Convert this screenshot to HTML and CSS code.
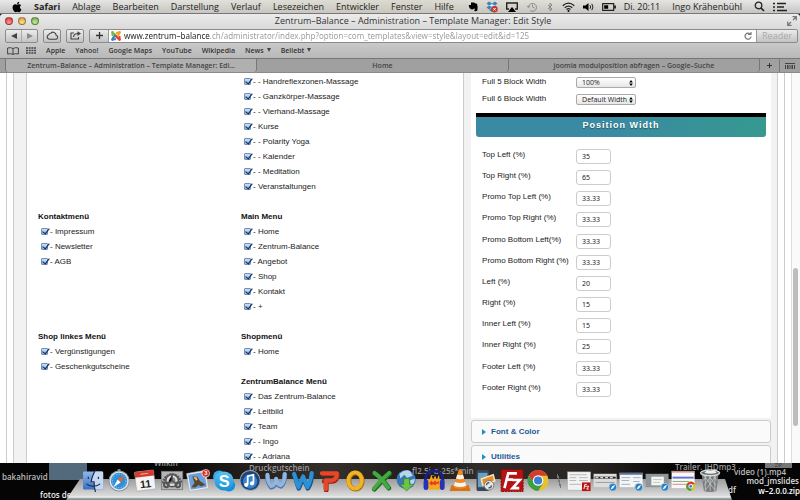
FILE: index.html
```html
<!DOCTYPE html>
<html lang="de">
<head>
<meta charset="utf-8">
<title>Zentrum-Balance – Administration – Template Manager: Edit Style</title>
<link rel="stylesheet" href="styles.css">
</head>
<body>
<header class="menubar">
  <nav class="menus">
    <svg class="apple" viewBox="0 0 384 512"><path d="M318.700 268.700c-.2-36.700 16.400-64.400 50-84.800-18.800-26.900-47.200-41.700-84.700-44.600-35.500-2.800-74.300 20.700-88.500 20.700-15 0-49.400-19.700-76.400-19.700C63.300 141.200 4 184.800 4 273.500q0 39.300 14.400 81.200c12.800 36.700 59 126.700 107.200 125.200 25.200-.6 43-17.900 75.800-17.900 31.800 0 48.300 17.900 76.400 17.900 48.600-.7 90.400-82.500 102.600-119.300-65.200-30.700-61.700-90-61.700-91.900zm-56.600-164.200c27.300-32.400 24.800-61.900 24-72.500-24.100 1.400-52 16.400-67.900 34.900-17.500 19.800-27.800 44.300-25.600 71.900 26.100 2 49.900-11.400 69.500-34.300z"/></svg>
    <b>Safari</b><span>Ablage</span><span>Bearbeiten</span><span>Darstellung</span><span>Verlauf</span><span>Lesezeichen</span><span>Entwickler</span><span>Fenster</span><span>Hilfe</span>
  </nav>
  <div class="status">
    <svg width="10" height="10" viewBox="0 0 10 10"><path d="M3 .5h3l1 .8 2 .4q1 3 .4 6.500Q9 9.600 7 9.300q-1-.3-.7-1.300.3-.8 1.300-.6Q6 6 5.500 7 4 8 2 6.500.8 5 .8 3H3z"/></svg>
    <svg width="12" height="12" viewBox="0 0 12 12"><path fill="#3d83b8" d="M3 .5 6 2.500 9 .5l2.500 2L9 4.500l2.500 2L9 8.500 6 6.300l-3 2.200-2.500-2L3 4.500l-2.500-2zM3 9l3-2 3 2-3 2z"/><path fill="#dcecf5" d="M3 4.500 6 3l3 1.500L6 6z"/><circle cx="8.500" cy="8.300" r="3.200" fill="#c5352c"/><path stroke="#fff" d="m7.300 7.100 2.400 2.400m0-2.400L7.300 9.500"/></svg>
    <svg width="12" height="10" viewBox="0 0 12 10"><path fill="none" stroke="#222" stroke-width="1.400" d="M3 7H.7V1h10.600v6H9"/><path d="m6 5 4 5H2z"/></svg>
    <svg class="faded" width="12" height="10" viewBox="0 0 12 10"><path fill="none" stroke="#222" d="M2.500 5A4 4 0 1 1 4 8.500M6.500 2.500V5l2 1M.8 4l1.700 1.700L4 4"/></svg>
    <svg class="faded" width="8" height="10" viewBox="0 0 8 10"><path fill="none" stroke="#222" d="m2 3 4 4-2 2V1l2 2-4 4"/></svg>
    <svg width="13" height="10" viewBox="0 0 13 10"><path fill="none" stroke="#222" stroke-width="1.300" d="M.7 3.700q5.800-5.200 11.600 0M2.700 5.700q3.800-3.200 7.600 0M4.500 7.500q2-1.600 4 0"/><circle cx="6.500" cy="9" r="1"/></svg>
    <svg width="11" height="10" viewBox="0 0 11 10"><path d="M0 3.500h2.500L5.500 1v8l-3-2.500H0z"/><path fill="none" stroke="#222" d="M7 3.200q1.300 1.800 0 3.600M8.800 1.800q2.300 3.200 0 6.400"/></svg>
    <svg width="14" height="10" viewBox="0 0 14 10"><path fill="none" stroke="#222" stroke-width="1.200" d="M.7 1.700h11v6.600H.7z"/><path d="M2.200 3.200h4v3.600h-4zM12.300 3.500h1.500v3h-1.500z"/></svg>
    <span>Di. 20:11</span>
    <span class="user">Ingo Krähenbühl</span>
    <svg class="spot" width="11" height="11" viewBox="0 0 11 11"><circle cx="4.500" cy="4.500" r="3.300" fill="none" stroke="#222" stroke-width="1.300"/><path stroke="#222" stroke-width="1.700" d="m7 7 3 3"/></svg>
    <svg width="14" height="10" viewBox="0 0 14 10"><path stroke="#222" stroke-width="1.700" d="M0 1.500h2M4 1.500h9M0 5h2M4 5h7M0 8.500h2M4 8.500h10"/></svg>
  </div>
</header>

<section class="browser">
  <div class="titlebar">
    <div class="lights"><i class="red"></i><i class="yellow"></i><i class="green"></i></div>
    <h1>Zentrum–Balance – Administration – Template Manager: Edit Style</h1>
    <svg class="expand" width="10" height="10" viewBox="0 0 10 10"><path fill="none" stroke="#777" stroke-width="1.200" d="M5.500.7h3.800v3.800M9 1 6 4M4.500 9.300H.7V5.500M1 9l3-3"/></svg>
  </div>

  <div class="toolbar">
    <div class="pair">
      <button type="button" aria-label="Zurück"><svg width="6" height="6" viewBox="0 0 6 6"><path fill="#444" d="M6 0v6L0 3z"/></svg></button>
      <button type="button" aria-label="Vorwärts"><svg width="6" height="6" viewBox="0 0 6 6"><path fill="#8a8a8a" d="M0 0v6l6-3z"/></svg></button>
    </div>
    <button class="tool" type="button" aria-label="iCloud-Tabs"><svg width="13" height="9" viewBox="0 0 13 9"><path fill="none" stroke="#444" stroke-width="1.100" d="M3.300 8.200a2.300 2.300 0 0 1-.5-4.500 1.700 1.700 0 0 1 2-1.400 3 3 0 0 1 5.300 2 2 2 0 0 1 0 3.900z"/></svg></button>
    <button class="tool" type="button" aria-label="Teilen"><svg width="11" height="9" viewBox="0 0 11 9"><path fill="none" stroke="#444" stroke-width="1.100" d="M4 2H1v6h7.500V6M3.500 6q.5-3.500 4.500-3.500"/><path fill="#444" d="M7.500.3 11 2.600 7.500 5z"/></svg></button>
    <div class="address">
      <button type="button" aria-label="Lesezeichen hinzufügen"><svg width="7" height="7" viewBox="0 0 7 7"><path stroke="#333" stroke-width="1.300" d="M3.500 0v7M0 3.500h7"/></svg></button>
      <label class="url">
        <svg width="10" height="10" viewBox="0 0 10 10"><g fill="none" stroke-width="2"><path stroke="#7ab83f" d="M1.500 5V3q1-1 2 0l2 2"/><path stroke="#f59b26" d="M5 1.700h2.500q1 1 0 2L5 6"/><path stroke="#e0402f" d="M8.500 5v2q-1 1-2 0l-2-2"/><path stroke="#3e7bc0" d="M5 8.300H2.500q-1-1 0-2L4.500 4"/></g><circle cx="1.500" cy="1.500" r="1.400" fill="#7ab83f"/><circle cx="8.500" cy="1.500" r="1.400" fill="#f59b26"/><circle cx="8.500" cy="8.500" r="1.400" fill="#e0402f"/><circle cx="1.500" cy="8.500" r="1.400" fill="#3e7bc0"/></svg>
        <input type="text" aria-label="Adresse" value="www.zentrum–balance.ch/administrator/index.php?option=com_templates&amp;view=style&amp;layout=edit&amp;id=125">
        <svg width="8" height="8" viewBox="0 0 8 8"><path fill="none" stroke="#777" stroke-width="1.200" d="M6.500 2.500A3 3 0 1 0 7 4.500M4 2.500h3V0"/></svg>
      </label>
      <button class="reader" type="button">Reader</button>
    </div>
  </div>

  <nav class="bookmarks">
    <svg width="12" height="8" viewBox="0 0 12 8"><path fill="none" stroke="#444" d="M6 1.500Q3.500 0 .6 1v6q3-.8 5.400.3Q8.500 6.200 11.400 7V1Q8.500 0 6 1.500zv6"/></svg>
    <svg width="10" height="7" viewBox="0 0 10 7"><path stroke="#444" stroke-width="1.700" stroke-dasharray="2 .7" d="M0 1h10M0 3.500h10M0 6h10"/></svg>
    <a href="#">Apple</a><a href="#">Yahoo!</a><a href="#">Google Maps</a><a href="#">YouTube</a><a href="#">Wikipedia</a><a href="#" class="drop">News</a><a href="#" class="drop">Beliebt</a>
  </nav>

  <nav class="tabs">
    <a href="#" class="tab active">Zentrum–Balance – Administration – Template Manager: Edi…</a>
    <a href="#" class="tab">Home</a>
    <a href="#" class="tab">joomla modulposition abfragen – Google–Suche</a>
    <button type="button" aria-label="Neuer Tab"><svg width="5" height="5" viewBox="0 0 5 5"><path stroke="#333" d="M2.500 0v5M0 2.500h5"/></svg></button>
    <button type="button" aria-label="Alle Tabs"><svg width="10" height="6" viewBox="0 0 10 6"><path stroke="#444" d="M0 .5h10M.5 2v4M2.500 2v4M4 2v4M6 2v4M7.500 2v4M9.500 2v4"/></svg></button>
  </nav>

  <main class="page">
    <div class="outer">
      <div class="frame">
        <section class="assign">
          <fieldset></fieldset>
          <fieldset>
            <label><input type="checkbox" checked>- - Handreflexzonen-Massage</label>
            <label><input type="checkbox" checked>- - Ganzkörper-Massage</label>
            <label><input type="checkbox" checked>- - Vierhand-Massage</label>
            <label><input type="checkbox" checked>- Kurse</label>
            <label><input type="checkbox" checked>- - Polarity Yoga</label>
            <label><input type="checkbox" checked>- - Kalender</label>
            <label><input type="checkbox" checked>- - Meditation</label>
            <label><input type="checkbox" checked>- Veranstaltungen</label>
          </fieldset>
          <fieldset>
            <legend>Kontaktmenü</legend>
            <label><input type="checkbox" checked>- Impressum</label>
            <label><input type="checkbox" checked>- Newsletter</label>
            <label><input type="checkbox" checked>- AGB</label>
          </fieldset>
          <fieldset>
            <legend>Main Menu</legend>
            <label><input type="checkbox" checked>- Home</label>
            <label><input type="checkbox" checked>- Zentrum-Balance</label>
            <label><input type="checkbox" checked>- Angebot</label>
            <label><input type="checkbox" checked>- Shop</label>
            <label><input type="checkbox" checked>- Kontakt</label>
            <label><input type="checkbox" checked>- +</label>
          </fieldset>
          <fieldset>
            <legend>Shop linkes Menü</legend>
            <label><input type="checkbox" checked>- Vergünstigungen</label>
            <label><input type="checkbox" checked>- Geschenkgutscheine</label>
          </fieldset>
          <div class="stack">
            <fieldset>
              <legend>Shopmenü</legend>
              <label><input type="checkbox" checked>- Home</label>
            </fieldset>
            <fieldset>
              <legend>ZentrumBalance Menü</legend>
              <label><input type="checkbox" checked>- Das Zentrum-Balance</label>
              <label><input type="checkbox" checked>- Leitbild</label>
              <label><input type="checkbox" checked>- Team</label>
              <label><input type="checkbox" checked>- - Ingo</label>
              <label><input type="checkbox" checked>- - Adriana</label>
            </fieldset>
          </div>
        </section>

        <aside class="options">
          <div class="panel">
            <div class="selects">
              <label for="full5">Full 5 Block Width</label>
              <span class="pick"><select id="full5"><option>100%</option></select><svg width="4" height="6" viewBox="0 0 4 6"><path d="m2 0 1.800 2.400H.2zM2 6 .2 3.600h3.600z"/></svg></span>
              <label for="full6">Full 6 Block Width</label>
              <span class="pick"><select id="full6"><option>Default Width</option></select><svg width="4" height="6" viewBox="0 0 4 6"><path d="m2 0 1.800 2.400H.2zM2 6 .2 3.600h3.600z"/></svg></span>
            </div>
            <h2>Position Width</h2>
            <div class="widths">
              <label for="w1">Top Left (%)</label><input id="w1" type="text" value="35">
              <label for="w2">Top Right (%)</label><input id="w2" type="text" value="65">
              <label for="w3">Promo Top Left (%)</label><input id="w3" type="text" value="33.33">
              <label for="w4">Promo Top Right (%)</label><input id="w4" type="text" value="33.33">
              <label for="w5">Promo Bottom Left(%)</label><input id="w5" type="text" value="33.33">
              <label for="w6">Promo Bottom Right (%)</label><input id="w6" type="text" value="33.33">
              <label for="w7">Left (%)</label><input id="w7" type="text" value="20">
              <label for="w8">Right (%)</label><input id="w8" type="text" value="15">
              <label for="w9">Inner Left (%)</label><input id="w9" type="text" value="15">
              <label for="w10">Inner Right (%)</label><input id="w10" type="text" value="25">
              <label for="w11">Footer Left (%)</label><input id="w11" type="text" value="33.33">
              <label for="w12">Footer Right (%)</label><input id="w12" type="text" value="33.33">
            </div>
          </div>
          <button class="fold" type="button"><i></i>Font &amp; Color</button>
          <button class="fold" type="button"><i></i>Utilities</button>
        </aside>
      </div>
    </div>
    <div class="scrollbar"><div class="thumb"></div></div>
  </main>
</section>

<footer class="desktop">
  <div class="preview"></div>
  <span class="file wilkin">Wilkin</span>
  <span class="file baka">bakahiravid</span>
  <span class="file fotos">fotos de</span>
  <span class="file druck">Druckgutschein</span>
  <span class="file sepin">fl2.5i_a-25s*min</span>
  <span class="file trailer">Trailer. IHDmp3</span>
  <span class="file video">video (1).mp4</span>
  <span class="file slides">mod_jmslides</span>
  <span class="file zip">w–2.0.0.zip</span>
  <span class="file pdf">df</span>
  <span class="zipbox">ZIP</span>
  <div class="shelf"></div>
  <div class="dock">
    <svg viewBox="0 0 24 24"><defs><linearGradient id="fl" x2="0" y2="1"><stop stop-color="#8fb8ec"/><stop offset="1" stop-color="#3a6fc2"/></linearGradient><linearGradient id="sk" x2="0" y2="1"><stop stop-color="#5cc3f5"/><stop offset="1" stop-color="#1590d8"/></linearGradient></defs><rect x="1.500" y="2.500" width="21" height="19" rx="1.500" fill="url(#fl)"/><path fill="#c4d8f2" d="M13.500 2.500H21q1.500 0 1.500 1.500v16q0 1.500-1.500 1.500h-7q-1-4-1-7h-3q0-6 3.500-12z"/><path fill="none" stroke="#1b2b48" stroke-width="1.200" d="M14.500 1q-4 7-4.500 12.500h3q0 6 1.500 10.500M7 8v2.500M17.500 8v2.500M5 15.500q7 5 14.500 0"/></svg>
    <svg viewBox="0 0 24 24"><circle cx="12" cy="1.800" r="1.800" fill="#8b9299"/><circle cx="12" cy="12.500" r="11" fill="#8b9299"/><circle cx="12" cy="12.500" r="10" fill="#e1e5e8"/><circle cx="12" cy="12.500" r="8.500" fill="#2e8fd8"/><circle cx="12" cy="12.500" r="7" fill="none" stroke="#b9dcf3" stroke-dasharray="1 1.700"/><path fill="#e8642f" d="m18 6-4.500 8-3-3z"/><path fill="#fff" d="m6 19 4.500-8 3 3z"/></svg>
    <svg viewBox="0 0 24 24"><g transform="rotate(-7 12 12)"><rect x="2" y="2" width="20" height="20" rx="1" fill="#f4f4f4" stroke="#999" stroke-width=".5"/><path fill="#d43c31" d="M2 2h20v6H2z"/><text x="12" y="19.500" text-anchor="middle" class="cal">11</text><path stroke="#f5bcb8" d="M8 5h8"/></g></svg>
    <svg viewBox="0 0 24 24"><rect x="1" y="2.500" width="22" height="19" fill="#b4b5b6" stroke="#808080"/><path fill="none" stroke="#555" stroke-width="3" stroke-dasharray="2 .8" d="M3 15a9 9 0 0 1 18 0"/><circle cx="12" cy="12" r="6.500" fill="none" stroke="#555" stroke-width="1.500"/><circle cx="12" cy="12" r="5.500" fill="#ddd"/><circle cx="12" cy="12" r="3.500" fill="#888"/><path stroke="#555" stroke-width="1.500" d="M12 6v6l-5 4m5-4 5 4"/><circle cx="6" cy="16.500" r="2.500" fill="none" stroke="#555" stroke-width="2"/><circle cx="18" cy="16.500" r="2.500" fill="none" stroke="#555" stroke-width="2"/></svg>
    <svg viewBox="0 0 24 24"><g transform="rotate(-10 11 13)"><rect x="1.500" y="3" width="20" height="19" fill="#eee" stroke="#aaa" stroke-width=".5"/><rect x="3" y="4.500" width="17" height="16" fill="#6c9fdc"/><path fill="#57492f" d="m4 18 4-4-1-7 5 1 2 5 5 5-5 1-2-2-4 2z"/><path fill="#d9b687" d="m8 8 3 0 1 3-2 1z"/></g><circle cx="20" cy="4.500" r="4" fill="#d92a20" stroke="#fff" stroke-width=".7"/><text x="20" y="6.700" text-anchor="middle" class="badge">3</text></svg>
    <svg viewBox="0 0 24 24"><circle cx="7" cy="8" r="6.500" fill="#3aacec"/><circle cx="17" cy="17" r="6.500" fill="#1590d8"/><circle cx="12" cy="12.500" r="10" fill="url(#sk)"/><text x="12" y="19" text-anchor="middle" class="skype">S</text></svg>
    <svg viewBox="0 0 24 24"><circle cx="12" cy="12" r="11" fill="#9ba7b5"/><circle cx="12" cy="12" r="10" fill="#1d4378"/><circle cx="12" cy="13" r="7.500" fill="#3482c9"/><path fill="none" stroke="#fff" stroke-width="1.800" d="M9.500 16V7.500l6-1.500v8.500"/><circle cx="8" cy="16.500" r="2.200" fill="#fff"/><circle cx="14" cy="15" r="2.200" fill="#fff"/></svg>
    <svg viewBox="0 0 24 24"><g fill="none" stroke-linecap="round" stroke-linejoin="round"><path stroke="#4a76ad" stroke-width="5" d="M3 7q0 8 4 12 4-1 5-8 1 6 5 7 4-3 4-12"/><path stroke="#8fb5e2" stroke-width="4" d="M3 6q0 8 4 12 4-1 5-8 1 6 5 7 4-3 4-12"/></g></svg>
    <svg viewBox="0 0 24 24"><g fill="none" stroke-linecap="round" stroke-linejoin="round"><path stroke="#15568f" stroke-width="5" d="m3 6 4.500 14L12 9l5 11q4-6 4-15"/><path stroke="#2d90d4" stroke-width="4" d="m2.500 5 4.500 14L12 7.500 16.500 19Q20 13 21 4"/></g></svg>
    <svg viewBox="0 0 24 24"><g fill="none" stroke-linecap="round" stroke-linejoin="round"><path stroke="#98200f" stroke-width="5" d="M7 13h8q6-1 5.500-8H6M9 16v6"/><path stroke="#e5472a" stroke-width="4.500" d="M4.500 4.500H20q.5 6-5 7.500H8.500v9"/></g></svg>
    <svg viewBox="0 0 24 24"><g fill="none"><ellipse cx="12.500" cy="12.500" rx="7" ry="8.500" stroke="#a86d08" stroke-width="5"/><ellipse cx="12" cy="12" rx="7" ry="8.500" stroke="#f0b323" stroke-width="4"/></g></svg>
    <svg viewBox="0 0 24 24"><g fill="none" stroke-linecap="round"><path stroke="#19651f" stroke-width="5" d="M21 5Q13 12 5 21M6 5q6 4 14 15"/><path stroke="#43aa42" stroke-width="4" d="M20.500 4Q12 11 4.500 20.500M5 4q6 4 14.500 15.500"/></g></svg>
    <svg viewBox="0 0 24 24"><circle cx="11" cy="11" r="10" fill="#3877b6"/><path fill="#b6d6ec" d="M4 5q6-5 11-3l3 5-6 2-3-3-4 4zM15 12l5-2q0 6-4 8z"/><path fill="#6cc344" stroke="#367c20" stroke-width=".6" d="M8.500 10h6v6h4L11.500 23l-7-7h4z"/></svg>
    <svg viewBox="0 0 24 24"><path fill="none" stroke="#171f8c" stroke-width="3" d="M3 14Q2 2 12 2t9 12"/><path fill="#f5a81e" d="m4 16 1-6 2 2 2-6 2 5 2-4 2 4 2-5 1 6 2 0v8l-4 2-4-1-4 1-4-2z"/><path fill="#e83c20" d="m7 15 2-3 2 2 2-2 2 2 2-2v4l-2-1-2 2-2-1-2 1z"/><rect x="1" y="11" width="5" height="11" rx="2.500" fill="#2632b8"/><rect x="18" y="11" width="5" height="11" rx="2.500" fill="#2632b8"/></svg>
    <svg viewBox="0 0 24 24"><path fill="#d47317" d="M3 17h18l2 6H1z"/><path fill="#f08a1e" d="M10.500 1q1.500-1 3 0l5.500 18q-7 3-14 0z"/><path fill="#f4f4f4" d="m9 6-1.200 4q4 1.600 8.400 0L15 6q-3 1-6 0zM6.700 13.500l-1.200 4q6.500 2.500 13 0l-1.200-4q-5 2-10.600 0z"/></svg>
    <svg viewBox="0 0 24 24"><rect x="2" y="1" width="13" height="22" rx="2" fill="#384657"/><rect x="3.500" y="4" width="10" height="15" fill="#6e9ec2"/><path fill="#f4e4bd" d="m6 10 14-5 2 8-14 5z"/><path fill="#e88c25" d="m8 11 11-4 1 5-11 4z"/><circle cx="15" cy="17" r="5" fill="#e5e7e8" stroke="#666" stroke-width=".8"/><path fill="none" stroke="#555" stroke-width="1.500" d="M12.500 17q0-3 3-2.500M17.500 17q0 3-3 2.500"/></svg>
    <svg viewBox="0 0 24 24"><rect x=".5" y=".5" width="23" height="23" fill="#b61313" stroke="#7c0b0b" stroke-dasharray="2 1"/><path fill="none" stroke="#fff" stroke-width="2.800" d="M4 20 8 4.500h9M6 11h7M12.500 11.500h7.500l-7.500 8.500h7"/></svg>
    <svg viewBox="0 0 24 24"><circle cx="12" cy="12" r="11" fill="#e8c22e"/><path fill="#d63b2b" d="M2 7Q6 1 12 1t10 6H12l-4 8z"/><path fill="#3d9e48" d="M2 7q-3 6 1 11 4 5 9 5l5-8-9-1z"/><circle cx="12" cy="12" r="5.500" fill="#fff"/><circle cx="12" cy="12" r="4.300" fill="#3b80cd"/></svg>
    <i class="divider"></i>
    <svg viewBox="0 0 24 24"><rect y="3" width="24" height="19" fill="#f2f2f2" stroke="#aaa" stroke-width=".5"/><path stroke="#b6b6b6" d="M2 6h18M2 9h7M12 9h9M2 12h7M12 12h9M2 16h12"/><rect x="15" y="14" width="9" height="9" fill="#b61313"/><path fill="none" stroke="#fff" d="m17 21 1-5h2m-2 2h2m0 0h2l-2 3h2"/></svg>
    <svg viewBox="0 0 24 24"><rect y="5" width="24" height="14" fill="#ddd"/><path stroke="#222" stroke-width="2" d="M1 9h22"/><path stroke="#fff" stroke-dasharray="3 2" d="M2 9h20"/><path stroke="#999" d="M2 14h20"/><use href="#compass"/></svg>
    <svg viewBox="0 0 24 24"><rect y="4" width="24" height="15" fill="#f4f5f7"/><path stroke="#5870a0" stroke-width="2" d="M0 5h24"/><path stroke="#a7b0c0" d="M2 9h9M2 12h8M14 9h8M14 13h7M2 16h9"/><g id="compass"><circle cx="20" cy="19" r="4.500" fill="#b8c6d1"/><circle cx="20" cy="19" r="3.500" fill="#2883c9"/><path fill="#fff" d="m22.500 16.500-2 3.500-3 1.500 2-3.500z"/></g></svg>
    <svg viewBox="0 0 24 24"><rect y="5" width="24" height="14" fill="#8e969c"/><rect x="6" y="8" width="13" height="9" fill="#f2f5f2"/><path stroke="#b8d1b7" d="M8 11h9M8 14h7"/><use href="#compass"/></svg>
    <svg viewBox="0 0 24 24"><rect y="2" width="24" height="18" fill="#f8f8f8"/><path stroke="#b34b42" d="M0 3h24"/><path stroke="#6670ce" stroke-width="2" d="M1 9h22"/><path stroke="#7fae78" d="M1 13h17"/><path stroke="#da8590" d="M1 16h14"/><circle cx="20" cy="18" r="5" fill="#e8c22e"/><path fill="#d63b2b" d="M15.500 16q5-6 9 0H20l-2 4z"/><path fill="#3d9e48" d="M15.500 16q-1.500 6 4.500 7l2-4-4-1z"/><circle cx="20" cy="18" r="2" fill="#3b80cd" stroke="#fff"/></svg>
    <svg viewBox="0 0 24 24"><path fill="#777b7d" d="M3 4h18l-2.500 19q-6.500 2-13 0z"/><path fill="none" stroke="#c8cccd" stroke-width=".8" d="m5 6 12 16M9 5l9 12M14 5l5 7M19 6 7 22M15 5 6 17M10 5l-5 7M7 5v18M12 5v18M17 5v18"/><ellipse cx="12" cy="4" rx="10" ry="3" fill="#696d6f" stroke="#ddd" stroke-width="1.300"/><path fill="#eee" d="m6 4 3-3 3 1 4-1 3 3q-7 2-13 0z"/></svg>
  </div>
</footer>
</body>
</html>
```
FILE: styles.css
```css
* { box-sizing: border-box; }

body {
  margin: 0;
  height: 100vh;
  display: flex;
  flex-direction: column;
  overflow: hidden;
  background: #050505;
  color: #222;
  font: 9px/14px "Open Sans", "Noto Sans", sans-serif;
}

button, input, select { margin: 0; padding: 0; border: 0; font: inherit; color: inherit; background: none; }
button { display: flex; align-items: center; justify-content: center; }
a { color: inherit; text-decoration: none; }
svg { display: block; flex: none; }

/* System menu bar */
.menubar {
  display: flex;
  align-items: center;
  justify-content: space-between;
  height: 14px;
  padding: 0 13px 0 12px;
  background: linear-gradient(90deg, rgba(196,190,177,0) 0, rgba(206,202,182,.5) 50%, rgba(196,190,177,0) 100%), linear-gradient(#e9e9e9, #c4c4c4);
  border-bottom: 1px solid #777;
  white-space: nowrap;
}
.menus, .status { display: flex; align-items: center; }
.menus { gap: 12px; }
.apple { width: 10px; height: 12px; }
.status { gap: 8px; }
.faded { opacity: .4; }
.user { margin-left: 4px; }
.spot { margin-left: 4px; }

/* Browser window */
.browser { flex: 1; min-height: 0; display: flex; flex-direction: column; background: linear-gradient(#ebebeb, #a8a8a8 58px); border-radius: 3px 3px 0 0; }

.titlebar { display: flex; align-items: center; justify-content: space-between; height: 14px; padding: 0 3px 0 5px; }
.titlebar h1 { margin: 0; font: inherit; color: #333; }
.lights { display: flex; gap: 5px; }
.lights i { width: 8px; height: 8px; border-radius: 50%; border: 1px solid #0005; }
.red { background: radial-gradient(circle at 50% 75%, #ff9b90, #d8332c); }
.yellow { background: radial-gradient(circle at 50% 75%, #ffe09a, #dd9628); }
.green { background: radial-gradient(circle at 50% 75%, #cdeaa5, #67a73c); }

.toolbar { display: flex; align-items: center; gap: 5px; height: 15px; padding: 0 2px 0 5px; }
.pair, .tool, .address { height: 14px; border: 1px solid #8b8b8b; border-radius: 2px; background: linear-gradient(#ececec, #c3c3c3); }
.pair { display: flex; width: 33px; }
.pair button { flex: 1; }
.pair button + button { border-left: 1px solid #aaa; }
.tool { width: 18px; }
.address { flex: 1; display: flex; }
.address > button { width: 18px; }
.url { flex: 1; display: flex; align-items: center; gap: 3px; padding: 0 4px 0 2px; background: #fff; border-left: 1px solid #999; border-right: 1px solid #999; }
.url input {
  flex: 1;
  min-width: 0;
  height: 12px;
  font: 8px/12px "Noto Sans", "Open Sans", sans-serif;
  color: transparent;
  background: linear-gradient(90deg, #222 86px, #999 86px);
  background-clip: text;
}
.address > .reader { width: 40px; color: #aaa; }

.bookmarks { display: flex; align-items: center; gap: 10px; height: 15px; padding-left: 7px; font-weight: 600; font-size: 7px; color: #333; }
.bookmarks svg + svg { margin-left: -3px; }
.drop::after { content: ""; display: inline-block; margin-left: 3px; vertical-align: 1px; border: 2px solid transparent; border-top: 4px solid #444; border-bottom: 0; }

.tabs { display: flex; height: 15px; padding-left: 5px; background: #a0a0a0; border-top: 1px solid #777; border-bottom: 1px solid #8a8a8a; font-weight: 600; font-size: 7px; line-height: 13px; color: #444; }
.tab { flex: 1; text-align: center; border-right: 1px solid #777; white-space: nowrap; overflow: hidden; border-radius: 0 0 3px 0; }
.tab.active { background: #b0b0b0; border-left: 1px solid #777; border-radius: 0 0 3px 3px; }
.tabs button { width: 20px; border-right: 1px solid #777; }
.tabs button:last-child { border: 0; }

/* Page viewport */
.page { flex: 1; min-height: 0; display: flex; overflow: hidden; background: #fff; color: #222; font: 8px/15px "Liberation Sans", Arial, sans-serif; padding-left: 6px; }
.outer { flex: 1; display: flex; padding: 0 6px; border: solid #ccc; border-width: 0 1px; }
.frame { flex: 1; display: grid; grid-template-columns: 7fr 5fr; padding-left: 12px; background: #f2f2f2; border: solid #ccc; border-width: 0 1px; }

.assign {
  display: grid;
  grid-template-columns: 203px 1fr;
  align-content: start;
  gap: 15px 0;
  padding: 1px 11px 0;
  background: #fff;
  border: solid #ccc;
  border-width: 0 1px;
}
fieldset { margin: 0; padding: 0; border: 0; min-width: 0; }
legend { padding: 0; font-weight: bold; color: #111; }
.stack { display: grid; gap: 15px; }
fieldset label { display: flex; align-items: center; gap: 2px; height: 15px; padding-left: 3px; }
[type="checkbox"] { appearance: none; position: relative; width: 7px; height: 7px; border: 1px solid #6f8fb8; border-radius: 1px; background: linear-gradient(#cfe2f7, #7fb1e8); }
[type="checkbox"]:checked::after { content: ""; position: absolute; left: 2px; top: -2px; width: 3px; height: 6px; border: solid #14284a; border-width: 0 1px 1px 0; transform: rotate(38deg); }

.options { padding: 0 6px 0 7px; }
.panel { padding: 1px 5px 17px; background: #fff; }
.selects, .widths { display: grid; grid-template-columns: 94px 1fr; padding-left: 6px; }
.selects { grid-auto-rows: 17px; margin-bottom: 5px; }
.pick { position: relative; justify-self: start; display: flex; margin-top: 3px; width: 60px; height: 11px; }
.pick select { appearance: none; width: 100%; padding-left: 5px; border: 1px solid #aaa; border-radius: 2px; background: linear-gradient(#fff, #e6e6e6); font: 7px/9px "Open Sans", sans-serif; }
.pick svg { position: absolute; right: 3px; top: 3px; }
.panel h2 {
  margin: 0;
  height: 24px;
  border-top: 4px solid #000;
  border-radius: 0 0 3px 3px;
  background: linear-gradient(100deg, #3a8aa3 45%, #36998f);
  color: #fff;
  font-size: 9px;
  line-height: 17px;
  letter-spacing: 1px;
  text-align: center;
  text-shadow: 0 1px 1px #0006;
}
.widths { padding-top: 10px; grid-auto-rows: 1fr; min-height: 264px; }
.widths input { width: 35px; height: 15px; margin-top: 2px; padding-left: 5px; border: 1px solid #ccc; border-radius: 3px; font: 7px/13px "Noto Sans", sans-serif; }
.fold { width: 100%; height: 23px; justify-content: flex-start; gap: 5px; margin-top: 2px; padding-left: 10px; border: 1px solid #ccc; border-radius: 3px; background: #fafafa; color: #1f5a90; font-weight: bold; }
.fold i { border: 3px solid transparent; border-left: 4px solid #2090bd; border-right: 0; }

.scrollbar { width: 15px; padding: 195px 2px 0 8px; background: linear-gradient(90deg, #fff 6px, #ddd 6px 7px, #fafafa 7px); }
.thumb { height: 158px; border-radius: 3px; background: #bdbdbd; }

/* Desktop strip with the dock over it */
.desktop { position: relative; flex: none; height: 37px; overflow: hidden; background: linear-gradient(90deg, #050505 150px, #241f1b 250px, #35302b 330px, #1d1a18 420px, #302c29 480px, #292522 590px, #050505 680px); }
.file { position: absolute; color: #999; font-size: 8px; line-height: 8px; font-weight: 600; white-space: nowrap; }
.preview { position: absolute; left: 49px; top: 0; width: 38px; height: 17px; background: #526a7b; }
.wilkin { left: 154px; top: -4px; }
.baka { left: 2px; top: 10px; color: #bbb; }
.fotos { left: 40px; top: 28px; color: #eee; }
.druck { left: 249px; top: 1px; }
.sepin { left: 412px; top: 4px; }
.trailer { left: 675px; top: 0; }
.video { left: 734px; top: 5px; color: #bbb; }
.slides { right: 1px; top: 14px; color: #ddd; }
.zip { right: 0; top: 24px; color: #fff; }
.pdf { left: 728px; top: 23px; color: #ddd; }
.zipbox { position: absolute; left: 765px; top: 0; width: 27px; height: 5px; background: #777; color: #333; font-size: 5px; line-height: 5px; text-align: center; }
.shelf { position: absolute; left: 66px; right: 68px; bottom: 0; height: 21px; background: linear-gradient(#9c9c9c, #dcdcdc 17px, #f3f3f3 18px, #819092 20px); clip-path: polygon(14px 0, calc(100% - 7px) 0, 100% 100%, 0 100%); }
.dock { position: absolute; left: 80px; right: 77px; bottom: 8px; display: flex; align-items: center; }
.dock svg { flex: 1; min-width: 0; height: 23px; }
.divider { width: 14px; height: 14px; background: linear-gradient(75deg, transparent 46%, #777 46% 54%, transparent 54%); }
.cal { font: bold 11px "Liberation Sans", sans-serif; fill: #222; }
.badge { font: bold 6px "Liberation Sans", sans-serif; fill: #fff; }
.skype { font: bold 17px "Liberation Sans", sans-serif; fill: #fff; }
```
